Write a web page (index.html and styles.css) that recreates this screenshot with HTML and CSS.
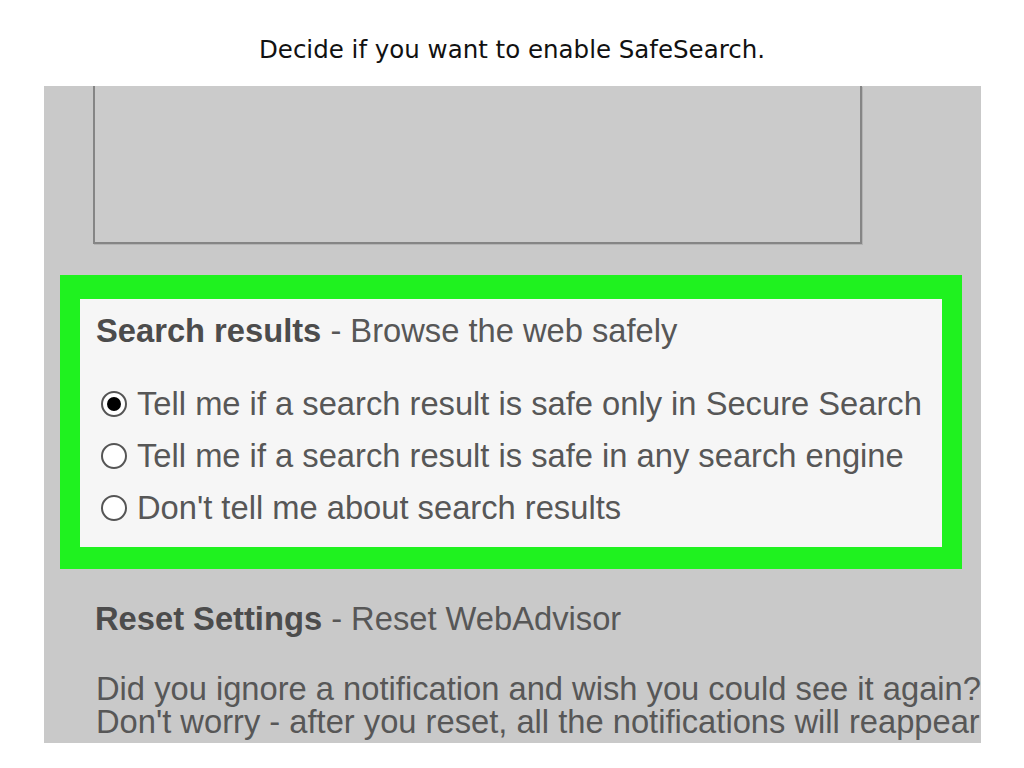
FILE: index.html
```html
<!DOCTYPE html>
<html lang="en">
<head>
<meta charset="utf-8">
<title>Decide if you want to enable SafeSearch.</title>
<link rel="stylesheet" href="styles.css">
</head>
<body>
<h1 class="title">Decide if you want to enable SafeSearch.</h1>
<div class="shot">
  <div class="textarea"></div>
  <div class="highlight">
    <div class="card">
      <p class="heading"><b>Search results</b> - Browse the web safely</p>
      <ul class="options">
        <li class="option"><span class="radio checked"></span>Tell me if a search result is safe only in Secure Search</li>
        <li class="option"><span class="radio"></span>Tell me if a search result is safe in any search engine</li>
        <li class="option"><span class="radio"></span>Don't tell me about search results</li>
      </ul>
    </div>
  </div>
  <p class="heading reset"><b>Reset Settings</b> - Reset WebAdvisor</p>
  <p class="desc">Did you ignore a notification and wish you could see it again?<br>Don't worry - after you reset, all the notifications will reappear</p>
</div>
</body>
</html>
```
FILE: styles.css
```css
body {
  margin: 0;
  background: #ffffff;
}

.title {
  margin: 0;
  padding-top: 36px;
  height: 28px;
  font-family: "DejaVu Sans", Verdana, sans-serif;
  font-weight: normal;
  font-size: 24.5px;
  line-height: 28px;
  text-align: center;
  color: #111111;
}

.shot {
  margin: 22px 0 0 44px;
  width: 937px;
  height: 657px;
  background: #c9c9c9;
  overflow: hidden;
  font-family: "Liberation Sans", Arial, sans-serif;
  font-size: 32.7px;
  color: #575757;
}

.textarea {
  margin-left: 49px;
  width: 765px;
  height: 156px;
  background: #cbcbcb;
  border: 2px solid #858585;
  border-top: none;
  box-shadow: 1px 1px 0 #b3b3b3;
}

.highlight {
  margin: 31px 0 0 16px;
  width: 862px;
  height: 248px;
  border: 20px solid #1ff21f;
  border-top-width: 24px;
  border-bottom-width: 22px;
}

.card {
  height: 100%;
  box-sizing: border-box;
  padding: 12px 0 0 16px;
  background: #f6f6f6;
}

.heading {
  margin: 0;
  line-height: 40px;
  white-space: nowrap;
}

.heading b {
  font-weight: bold;
  color: #4c4c4c;
}

.options {
  list-style: none;
  margin: 27px 0 0;
  padding: 0;
}

.option {
  display: flex;
  align-items: center;
  height: 52px;
  line-height: 52px;
  white-space: nowrap;
}

.radio {
  flex: none;
  display: flex;
  align-items: center;
  justify-content: center;
  box-sizing: border-box;
  width: 26px;
  height: 26px;
  margin: 0 10px 0 5px;
  border: 2px solid #555555;
  border-radius: 50%;
  background: #ffffff;
}

.radio.checked::before {
  content: "";
  width: 14px;
  height: 14px;
  border-radius: 50%;
  background: #000000;
}

.reset {
  margin: 30px 0 0 51px;
}

.desc {
  margin: 33px 0 0 52px;
  line-height: 33px;
  white-space: nowrap;
}
```
